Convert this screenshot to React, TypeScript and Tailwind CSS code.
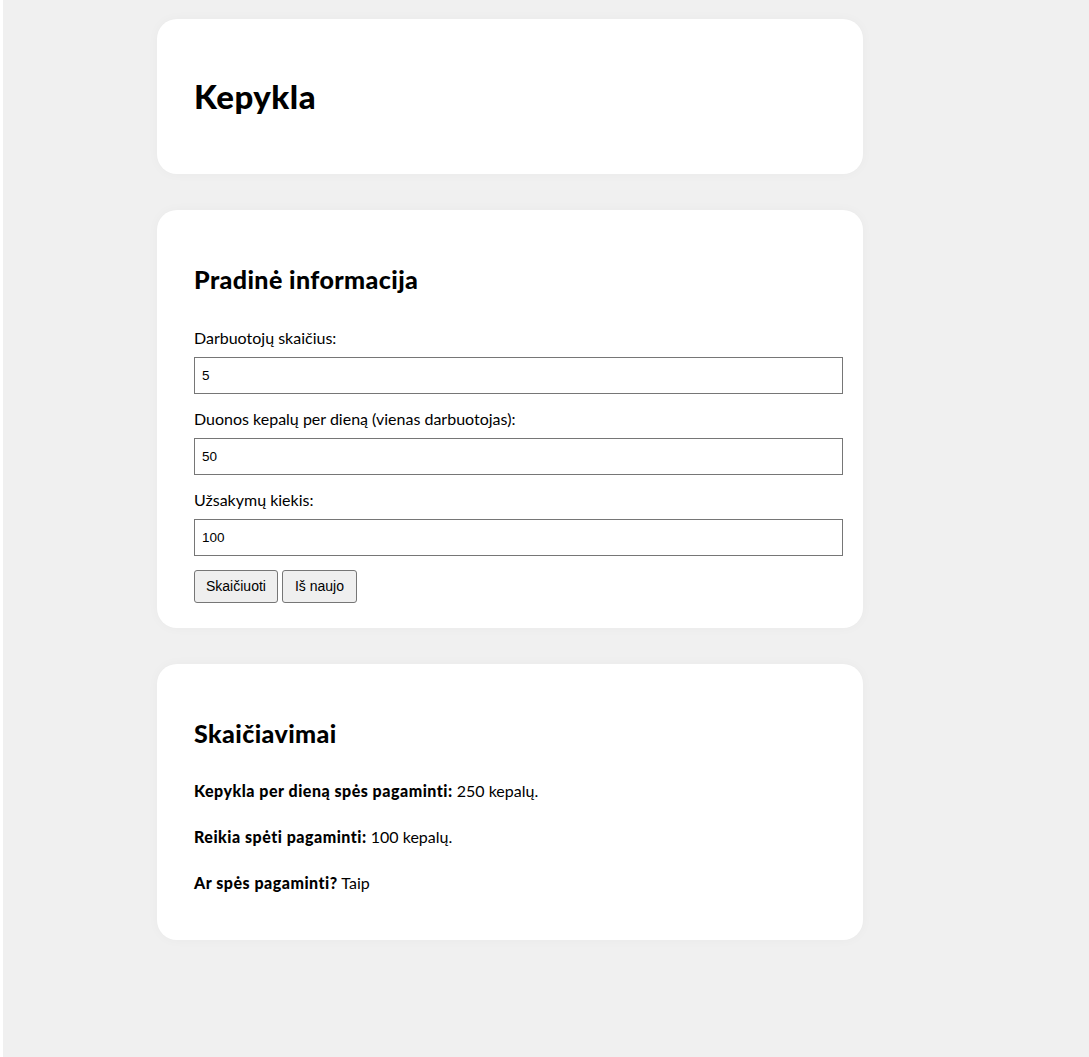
const font = { fontFamily: "Lato, 'Noto Sans', sans-serif" };

function Card({ children, className = "" }: { children: React.ReactNode; className?: string }) {
    return (
        <section className={`w-[706px] bg-white rounded-[20px] shadow-[0_0_12px_rgba(0,0,0,0.03)] px-[37px] ${className}`}>
            {children}
        </section>
    );
}

function Field({ label, value }: { label: string; value: string }) {
    return (
        <div className="flex flex-col">
            <label className="text-[16px] leading-[20px] text-black mb-[9px]">{label}</label>
            <input
                readOnly
                value={value}
                className="w-[649px] h-[37px] border border-[#767676] px-[7px] text-[13.5px] text-black outline-none font-['Liberation_Sans',Arial,sans-serif]"
            />
        </div>
    );
}

export default function App() {
    const workers = 5;
    const perWorker = 50;
    const orders = 100;
    const total = workers * perWorker;

    return (
        <div className="min-h-[1057px] bg-[#f0f0f0] border-l-[3px] border-white pl-[154px] pt-[19px] flex flex-col gap-[36px]" style={font}>
            <Card className="h-[155px] flex items-center">
                <h1 className="text-[33px] font-black text-black leading-none tracking-[0.5px]">Kepykla</h1>
            </Card>

            <Card className="pt-[54px] pb-[25px]">
                <h2 className="text-[25px] font-black text-black leading-[30px] mb-[34px] tracking-[0.4px]">Pradinė informacija</h2>
                <div className="flex flex-col gap-[15px]">
                    <Field label="Darbuotojų skaičius:" value={String(workers)} />
                    <Field label="Duonos kepalų per dieną (vienas darbuotojas):" value={String(perWorker)} />
                    <Field label="Užsakymų kiekis:" value={String(orders)} />
                </div>
                <div className="flex gap-[4px] mt-[14px] font-['Liberation_Sans',Arial,sans-serif]">
                    <button className="h-[33px] px-[11px] text-[14px] text-black bg-[#efefef] border border-[#767676] rounded-[3px]">Skaičiuoti</button>
                    <button className="h-[33px] px-[12px] text-[14px] text-black bg-[#efefef] border border-[#767676] rounded-[3px]">Iš naujo</button>
                </div>
            </Card>

            <Card className="pt-[54px] pb-[47px]">
                <h2 className="text-[25px] font-black text-black leading-[30px] mb-[33px] tracking-[0.4px]">Skaičiavimai</h2>
                <div className="flex flex-col gap-[26px] text-[16px] leading-[20px] text-black">
                    <p><strong className="font-black tracking-[0.5px]">Kepykla per dieną spės pagaminti:</strong> {total} kepalų.</p>
                    <p><strong className="font-black tracking-[0.5px]">Reikia spėti pagaminti:</strong> {orders} kepalų.</p>
                    <p><strong className="font-black tracking-[0.5px]">Ar spės pagaminti?</strong> {total >= orders ? "Taip" : "Ne"}</p>
                </div>
            </Card>
        </div>
    );
}
